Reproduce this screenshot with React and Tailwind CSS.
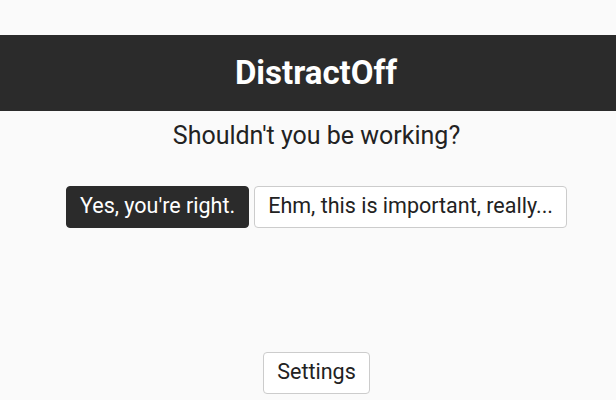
export default function App() {
    return (
        <div className="min-h-[400px] bg-[#fafafa] text-[#222] font-['Roboto',sans-serif] pt-[35px]">
            {/* Cabecera */}
            <header className="bg-[#2b2b2b] h-[76px] flex items-center justify-center pl-4">
                <h1 className="text-white text-[33px] font-bold">DistractOff</h1>
            </header>

            <div className="flex flex-col items-center pl-[17px]">
                <p className="text-[25px] leading-[1.5] mt-[6px]">Shouldn't you be working?</p>

                <div className="flex gap-[5px] mt-[31px]">
                    <button className="h-[42px] px-[13px] rounded-[4px] bg-[#2b2b2b] text-white text-[21.5px] border border-[#2b2b2b]">
                        Yes, you're right.
                    </button>
                    <button className="h-[42px] px-[13px] rounded-[4px] bg-white text-[#222] text-[21.5px] border border-[#ccc]">
                        Ehm, this is important, really...
                    </button>
                </div>

                <button className="mt-[124px] h-[42px] px-[13px] rounded-[4px] bg-white text-[#222] text-[21.5px] border border-[#ccc]">
                    Settings
                </button>
            </div>
        </div>
    );
}
